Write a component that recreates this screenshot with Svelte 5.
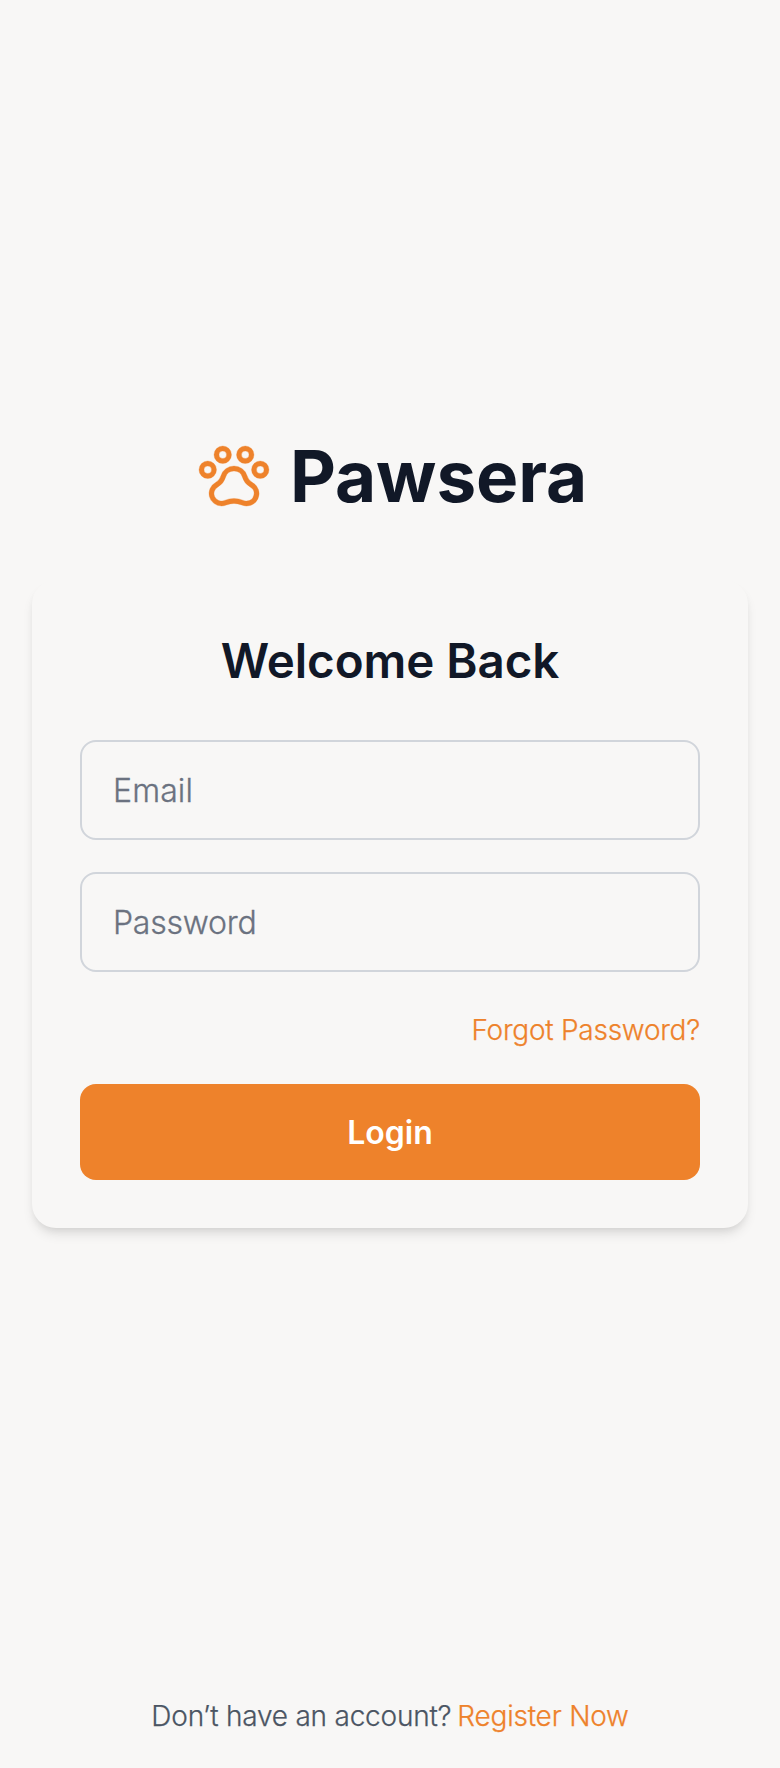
<script>
  let email = $state('');
  let password = $state('');
</script>

<div class="page">
  <main>
    <div class="brand">
      <svg viewBox="0 0 256 256" fill="currentColor" aria-hidden="true">
        <path d="M212,80a28,28,0,1,0,28,28A28,28,0,0,0,212,80Zm0,40a12,12,0,1,1,12-12A12,12,0,0,1,212,120ZM72,108a28,28,0,1,0-28,28A28,28,0,0,0,72,108ZM44,120a12,12,0,1,1,12-12A12,12,0,0,1,44,120ZM92,88A28,28,0,1,0,64,60,28,28,0,0,0,92,88Zm0-40A12,12,0,1,1,80,60,12,12,0,0,1,92,48Zm72,40a28,28,0,1,0-28-28A28,28,0,0,0,164,88Zm0-40a12,12,0,1,1-12,12A12,12,0,0,1,164,48Zm23.12,100.86a35.3,35.3,0,0,1-16.87-21.14,44,44,0,0,0-84.5,0A35.25,35.25,0,0,1,69,148.82,40,40,0,0,0,88,224a39.48,39.48,0,0,0,15.52-3.13,64.09,64.09,0,0,1,48.87,0,40,40,0,0,0,34.73-72ZM168,208a24,24,0,0,1-9.45-1.93,80.14,80.14,0,0,0-61.19,0,24,24,0,0,1-20.71-43.26,51.22,51.22,0,0,0,24.46-30.67,28,28,0,0,1,53.78,0,51.27,51.27,0,0,0,24.53,30.71A24,24,0,0,1,168,208Z" stroke="currentColor" stroke-width="1" />
      </svg>
      <h1>Pawsera</h1>
    </div>
    <form class="card" onsubmit={(e) => e.preventDefault()}>
      <h2>Welcome Back</h2>
      <input class="email" type="email" placeholder="Email" bind:value={email} />
      <input class="password" type="password" placeholder="Password" bind:value={password} />
      <a class="forgot" href="#forgot">Forgot Password?</a>
      <button type="submit">Login</button>
    </form>
  </main>
  <footer><span>Don’t have an account?</span><a href="#register">Register Now</a></footer>
</div>

<style>
  :global(body) { margin: 0; background: #f8f7f6; }
  .page {
    height: 1768px;
    display: flex;
    flex-direction: column;
    background: #f8f7f6;
    color: #111827;
    font-family: Inter, "Liberation Sans", sans-serif;
  }
  main {
    flex: 1;
    display: flex;
    flex-direction: column;
    justify-content: center;
    gap: 64px;
    padding: 0 32px;
  }
  .brand {
    display: flex;
    align-items: center;
    height: 80px;
    padding-left: 162px;
    gap: 16px;
  }
  .brand svg { width: 80px; height: 80px; flex: none; color: #ee822b; }
  h1, h2 { margin: 0; white-space: nowrap; }
  h1 { font-size: 71px; line-height: 80px; font-weight: 700; letter-spacing: -0.1px; }
  .card {
    display: flex;
    flex-direction: column;
    box-sizing: border-box;
    height: 648px;
    padding: 48px;
    border-radius: 24px;
    background: #f8f7f6;
    box-shadow: 0 8px 12px -2px rgba(0, 0, 0, 0.1), 0 4px 8px -4px rgba(0, 0, 0, 0.1);
  }
  h2 {
    margin-bottom: 47px;
    padding-top: 1px;
    font-size: 47.5px;
    line-height: 64px;
    font-weight: 600;
    letter-spacing: -0.05px;
    text-align: center;
  }
  input {
    box-sizing: border-box;
    width: 100%;
    height: 100px;
    flex: none;
    margin: 0 0 32px;
    padding: 0 31px;
    border: 2px solid #d1d5db;
    border-radius: 16px;
    outline: none;
    background: transparent;
    color: #111827;
    font: 300 32px/48px Inter, sans-serif;
    -webkit-text-stroke: 0.3px;
  }
  input::placeholder { color: #6b7280; opacity: 1; }
  .email { letter-spacing: 0.1px; }
  .password { letter-spacing: -0.25px; }
  a { color: #ee822b; text-decoration: none; font-weight: 300; -webkit-text-stroke: 0.25px; }
  .forgot {
    align-self: flex-end;
    margin: 6px 0 34px;
    font-size: 28px;
    line-height: 40px;
    letter-spacing: -0.25px;
  }
  button {
    height: 96px;
    padding: 2px 0 0;
    border: 0;
    border-radius: 16px;
    background: #ee822b;
    color: #fff;
    font: 600 32px/48px Inter, sans-serif;
  }
  footer {
    display: flex;
    justify-content: center;
    gap: 6px;
    padding: 32px 0;
    color: #4b5563;
    font-size: 28px;
    line-height: 40px;
    font-weight: 300;
    letter-spacing: -0.22px;
    -webkit-text-stroke: 0.25px;
  }
</style>
